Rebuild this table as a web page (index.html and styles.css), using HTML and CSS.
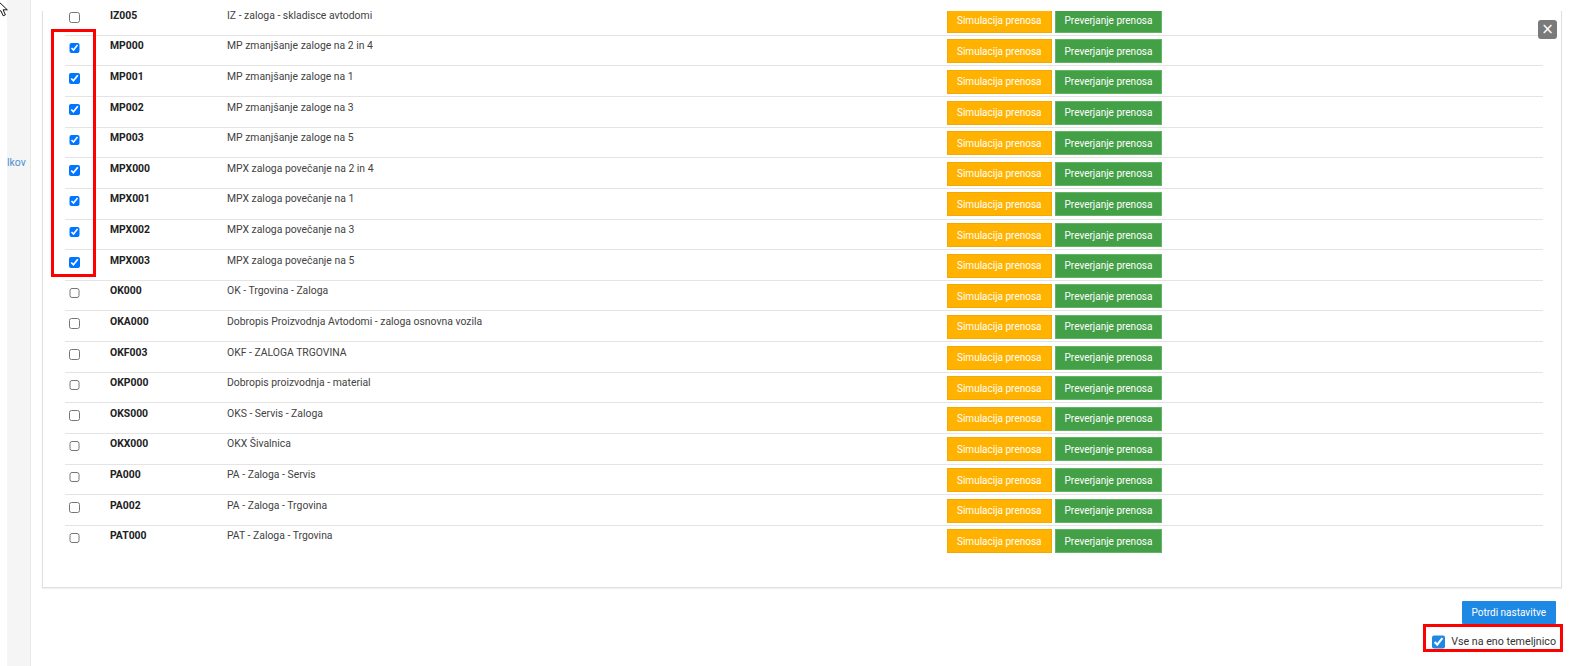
FILE: index.html
```html
<!DOCTYPE html>
<html lang="sl">
<head>
<meta charset="utf-8">
<title>Nastavitve prenosa</title>
<link rel="stylesheet" href="styles.css">
</head>
<body>
<div class="page">
  <div class="layout">
    <div class="edge"></div>
    <nav class="sidebar"><a class="side-link">lkov</a></nav>
    <main class="main">
      <section class="panel">
        <div class="list">
          <div class="row"><div class="c-check"><input type="checkbox"></div><div class="c-code">IZ005</div><div class="c-desc">IZ - zaloga - skladisce avtodomi</div><div class="c-actions"><button class="btn btn-sim">Simulacija prenosa</button><button class="btn btn-check">Preverjanje prenosa</button></div></div>
          <div class="row"><div class="c-check"><input type="checkbox" checked></div><div class="c-code">MP000</div><div class="c-desc">MP zmanjšanje zaloge na 2 in 4</div><div class="c-actions"><button class="btn btn-sim">Simulacija prenosa</button><button class="btn btn-check">Preverjanje prenosa</button></div></div>
          <div class="row"><div class="c-check"><input type="checkbox" checked></div><div class="c-code">MP001</div><div class="c-desc">MP zmanjšanje zaloge na 1</div><div class="c-actions"><button class="btn btn-sim">Simulacija prenosa</button><button class="btn btn-check">Preverjanje prenosa</button></div></div>
          <div class="row"><div class="c-check"><input type="checkbox" checked></div><div class="c-code">MP002</div><div class="c-desc">MP zmanjšanje zaloge na 3</div><div class="c-actions"><button class="btn btn-sim">Simulacija prenosa</button><button class="btn btn-check">Preverjanje prenosa</button></div></div>
          <div class="row"><div class="c-check"><input type="checkbox" checked></div><div class="c-code">MP003</div><div class="c-desc">MP zmanjšanje zaloge na 5</div><div class="c-actions"><button class="btn btn-sim">Simulacija prenosa</button><button class="btn btn-check">Preverjanje prenosa</button></div></div>
          <div class="row"><div class="c-check"><input type="checkbox" checked></div><div class="c-code">MPX000</div><div class="c-desc">MPX zaloga povečanje na 2 in 4</div><div class="c-actions"><button class="btn btn-sim">Simulacija prenosa</button><button class="btn btn-check">Preverjanje prenosa</button></div></div>
          <div class="row"><div class="c-check"><input type="checkbox" checked></div><div class="c-code">MPX001</div><div class="c-desc">MPX zaloga povečanje na 1</div><div class="c-actions"><button class="btn btn-sim">Simulacija prenosa</button><button class="btn btn-check">Preverjanje prenosa</button></div></div>
          <div class="row"><div class="c-check"><input type="checkbox" checked></div><div class="c-code">MPX002</div><div class="c-desc">MPX zaloga povečanje na 3</div><div class="c-actions"><button class="btn btn-sim">Simulacija prenosa</button><button class="btn btn-check">Preverjanje prenosa</button></div></div>
          <div class="row"><div class="c-check"><input type="checkbox" checked></div><div class="c-code">MPX003</div><div class="c-desc">MPX zaloga povečanje na 5</div><div class="c-actions"><button class="btn btn-sim">Simulacija prenosa</button><button class="btn btn-check">Preverjanje prenosa</button></div></div>
          <div class="row"><div class="c-check"><input type="checkbox"></div><div class="c-code">OK000</div><div class="c-desc">OK - Trgovina - Zaloga</div><div class="c-actions"><button class="btn btn-sim">Simulacija prenosa</button><button class="btn btn-check">Preverjanje prenosa</button></div></div>
          <div class="row"><div class="c-check"><input type="checkbox"></div><div class="c-code">OKA000</div><div class="c-desc">Dobropis Proizvodnja Avtodomi - zaloga osnovna vozila</div><div class="c-actions"><button class="btn btn-sim">Simulacija prenosa</button><button class="btn btn-check">Preverjanje prenosa</button></div></div>
          <div class="row"><div class="c-check"><input type="checkbox"></div><div class="c-code">OKF003</div><div class="c-desc">OKF - ZALOGA TRGOVINA</div><div class="c-actions"><button class="btn btn-sim">Simulacija prenosa</button><button class="btn btn-check">Preverjanje prenosa</button></div></div>
          <div class="row"><div class="c-check"><input type="checkbox"></div><div class="c-code">OKP000</div><div class="c-desc">Dobropis proizvodnja - material</div><div class="c-actions"><button class="btn btn-sim">Simulacija prenosa</button><button class="btn btn-check">Preverjanje prenosa</button></div></div>
          <div class="row"><div class="c-check"><input type="checkbox"></div><div class="c-code">OKS000</div><div class="c-desc">OKS - Servis - Zaloga</div><div class="c-actions"><button class="btn btn-sim">Simulacija prenosa</button><button class="btn btn-check">Preverjanje prenosa</button></div></div>
          <div class="row"><div class="c-check"><input type="checkbox"></div><div class="c-code">OKX000</div><div class="c-desc">OKX Šivalnica</div><div class="c-actions"><button class="btn btn-sim">Simulacija prenosa</button><button class="btn btn-check">Preverjanje prenosa</button></div></div>
          <div class="row"><div class="c-check"><input type="checkbox"></div><div class="c-code">PA000</div><div class="c-desc">PA - Zaloga - Servis</div><div class="c-actions"><button class="btn btn-sim">Simulacija prenosa</button><button class="btn btn-check">Preverjanje prenosa</button></div></div>
          <div class="row"><div class="c-check"><input type="checkbox"></div><div class="c-code">PA002</div><div class="c-desc">PA - Zaloga - Trgovina</div><div class="c-actions"><button class="btn btn-sim">Simulacija prenosa</button><button class="btn btn-check">Preverjanje prenosa</button></div></div>
          <div class="row"><div class="c-check"><input type="checkbox"></div><div class="c-code">PAT000</div><div class="c-desc">PAT - Zaloga - Trgovina</div><div class="c-actions"><button class="btn btn-sim">Simulacija prenosa</button><button class="btn btn-check">Preverjanje prenosa</button></div></div>
        </div>
      </section>
      <div class="footer">
        <button class="btn-confirm">Potrdi nastavitve</button>
        <label class="one-doc"><input type="checkbox" checked><span>Vse na eno temeljnico</span></label>
      </div>
    </main>
  </div>
  <button class="close" aria-label="Zapri">&#215;</button>
  <div class="mark mark-checks"></div>
  <div class="mark mark-option"></div>
  <svg class="cursor" width="10" height="17" viewBox="0 0 10 17"><path d="M-2.5 0.5 L-2.5 13.5 L0.8 10.6 L3.2 15.8 L5.4 14.8 L3.1 9.8 L7.3 9.8 Z" fill="#fff" stroke="#111" stroke-width="1" stroke-linejoin="round"/></svg>
</div>
</body>
</html>
```
FILE: styles.css
```css
* { box-sizing: border-box; }
html, body { margin: 0; padding: 0; }
body {
  width: 1573px;
  height: 666px;
  overflow: hidden;
  background: #fff;
  font-family: Roboto, "Liberation Sans", Arial, sans-serif;
  color: #333;
}
.page {
  position: relative;
  width: 1573px;
  height: 666px;
}
.layout {
  display: flex;
  height: 666px;
}
.edge {
  width: 7px;
  flex: none;
  background: #fff;
}
.sidebar {
  width: 24px;
  flex: none;
  background: #f5f5f5;
  border-right: 1px solid #e9e9e9;
  padding-top: 155px;
}
.side-link {
  display: block;
  font-size: 10.4px;
  line-height: 15px;
  color: #4a8fcf;
  white-space: nowrap;
}
.main {
  flex: 1;
  padding: 11px 11px 0 11px;
  display: flex;
  flex-direction: column;
}
.panel {
  border: 1px solid #e0e0e0;
  border-top: 0;
  box-shadow: 0 1px 1px rgba(0,0,0,0.06);
  overflow: hidden;
  padding: 0 18px 31px 22px;
}
.list {
  margin-top: -5.8px;
}
.row {
  display: grid;
  grid-template-columns: 45px 117px 720px auto;
  height: 30.625px;
  border-bottom: 1px solid #e4e4e4;
}
.row:last-child { border-bottom-color: transparent; }
.c-check { padding-left: 4px; }
.c-check input {
  width: 10.5px;
  height: 10.5px;
  margin: 7px 0 0 0;
  display: block;
}
.c-code, .c-desc {
  font-size: 10.4px;
  line-height: 15px;
  padding-top: 2.5px;
  white-space: nowrap;
}
.c-code { font-weight: 700; color: #212121; }
.c-desc { color: #424242; }
.c-actions {
  display: flex;
  gap: 3px;
  padding-top: 3.5px;
}
.btn {
  height: 24px;
  padding: 0 9px;
  border: 1px solid;
  border-radius: 0;
  font-family: Roboto, "Liberation Sans", Arial, sans-serif;
  font-size: 10px;
  color: #fff;
  white-space: nowrap;
  display: flex;
  align-items: center;
  justify-content: center;
}
.btn-sim { background: #ffb300; border-color: #f4a900; }
.btn-check { background: #43a047; border-color: #62b565; }
.footer {
  margin-top: 12.5px;
  padding-right: 6px;
  display: flex;
  flex-direction: column;
  align-items: flex-end;
}
.btn-confirm {
  height: 23px;
  padding: 0 10px;
  border: 0;
  border-radius: 1px;
  background: #1e88e5;
  color: #fff;
  font-family: Roboto, "Liberation Sans", Arial, sans-serif;
  font-size: 10px;
}
.one-doc {
  margin-top: 11px;
  display: flex;
  align-items: center;
  gap: 6px;
  font-size: 10.7px;
  line-height: 14px;
  color: #333;
}
.one-doc input {
  width: 13.5px;
  height: 13.5px;
  margin: 0;
  accent-color: #1e88e5;
}
.close {
  position: absolute;
  left: 1538px;
  top: 20px;
  width: 19px;
  height: 19px;
  padding: 0;
  border: 0;
  border-radius: 3px;
  background: #7a7a7a;
  color: #fff;
  font-family: "DejaVu Sans", sans-serif;
  font-size: 15px;
  line-height: 19px;
  text-align: center;
}
.mark {
  position: absolute;
  border: 3px solid #ff0000;
}
.mark-checks { left: 51px; top: 29px; width: 45px; height: 248px; }
.mark-option { left: 1423px; top: 624px; width: 140px; height: 28px; }
.cursor {
  position: absolute;
  left: 0;
  top: 0;
}
```
